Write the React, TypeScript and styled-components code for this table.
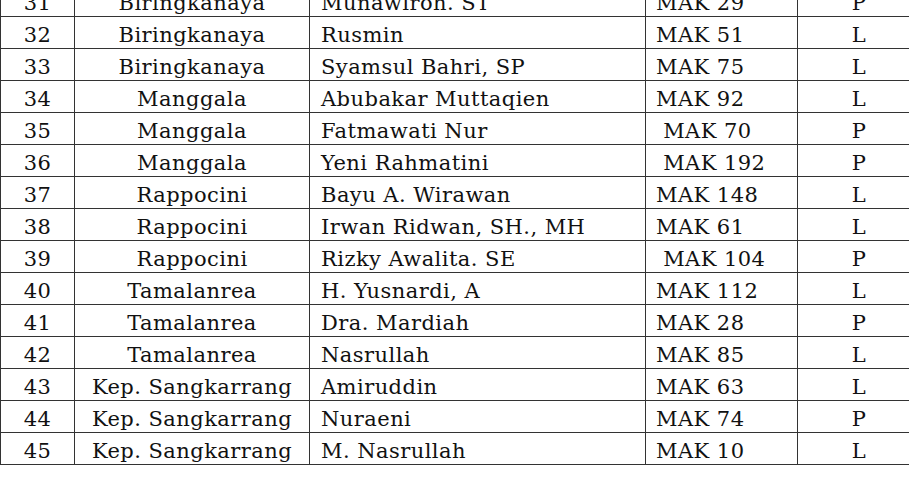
import React from "react";
import styled, { createGlobalStyle } from "styled-components";

const Global = createGlobalStyle`
  html, body { margin: 0; padding: 0; background: #ffffff; overflow: hidden; }
`;

const Page = styled.div`
  width: 909px;
  height: 487px;
  overflow: hidden;
  background: #fff;
`;

const Table = styled.table`
  margin-top: -16px;
  border-collapse: collapse;
  table-layout: fixed;
  width: 920px;
  font-family: "DejaVu Serif", serif;
  font-size: 21px;
  letter-spacing: 0.45px;
  color: #111;
`;

const Col = styled.col<{ $w: number }>`
  width: ${(p) => p.$w}px;
`;

const Row = styled.tr`
  height: 32px;
`;

const Cell = styled.td<{ $align?: "left" | "center"; $pad?: number }>`
  border: 1.6px solid #333;
  padding: 5px 0 0 ${(p) => p.$pad ?? 0}px;
  text-align: ${(p) => p.$align ?? "center"};
  white-space: pre;
  line-height: 25px;
  vertical-align: middle;
  overflow: hidden;
`;

type R = [string, string, string, string, string];
const rows: R[] = [
  ["31", "Biringkanaya", "Munawiroh. ST", "MAK 29", "P"],
  ["32", "Biringkanaya", "Rusmin", "MAK 51", "L"],
  ["33", "Biringkanaya", "Syamsul Bahri, SP", "MAK 75", "L"],
  ["34", "Manggala", "Abubakar Muttaqien", "MAK 92", "L"],
  ["35", "Manggala", "Fatmawati Nur", " MAK 70", "P"],
  ["36", "Manggala", "Yeni Rahmatini", " MAK 192", "P"],
  ["37", "Rappocini", "Bayu A. Wirawan", "MAK 148", "L"],
  ["38", "Rappocini", "Irwan Ridwan, SH., MH", "MAK 61", "L"],
  ["39", "Rappocini", "Rizky Awalita. SE", " MAK 104", "P"],
  ["40", "Tamalanrea", "H. Yusnardi, A", "MAK 112", "L"],
  ["41", "Tamalanrea", "Dra. Mardiah", "MAK 28", "P"],
  ["42", "Tamalanrea", "Nasrullah", "MAK 85", "L"],
  ["43", "Kep. Sangkarrang", "Amiruddin", "MAK 63", "L"],
  ["44", "Kep. Sangkarrang", "Nuraeni", "MAK 74", "P"],
  ["45", "Kep. Sangkarrang", "M. Nasrullah", "MAK 10", "L"],
];

export default function App() {
  return (
    <Page>
      <Global />
      <Table>
        <colgroup>
          <Col $w={74} />
          <Col $w={235} />
          <Col $w={336} />
          <Col $w={152} />
          <Col $w={123} />
        </colgroup>
        <tbody>
          {rows.map((r) => (
            <Row key={r[0]}>
              <Cell>{r[0]}</Cell>
              <Cell>{r[1]}</Cell>
              <Cell $align="left" $pad={11}>{r[2]}</Cell>
              <Cell $align="left" $pad={10}>{r[3]}</Cell>
              <Cell>{r[4]}</Cell>
            </Row>
          ))}
        </tbody>
      </Table>
    </Page>
  );
}
